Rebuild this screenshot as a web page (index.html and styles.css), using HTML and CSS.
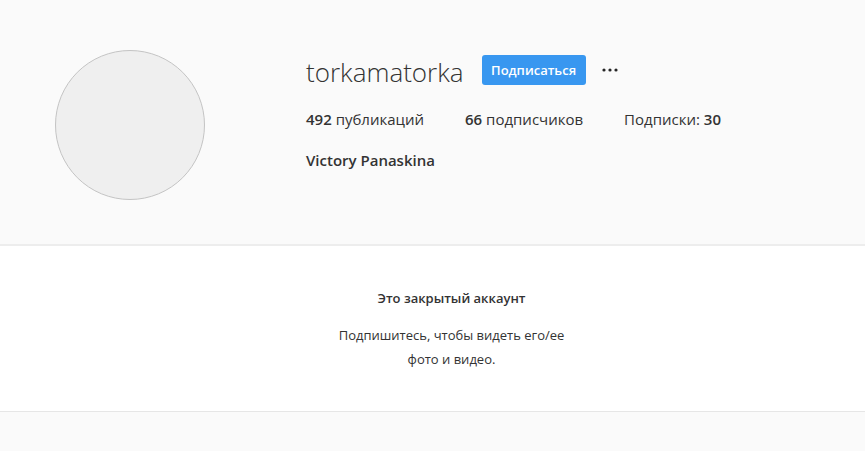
FILE: index.html
```html
<!DOCTYPE html>
<html lang="ru">
<head>
    <meta charset="UTF-8">
    <meta name="viewport" content="width=device-width, initial-scale=1.0">
    <title>torkamatorka</title>
    <link rel="stylesheet" href="styles.css">
</head>
<body>

<main>
    <!-- Profile header -->
    <header class="profile">
        <div class="avatar-column">
            <div class="avatar"></div>
        </div>
        <section class="info">
            <div class="title-row">
                <h1 class="username">torkamatorka</h1>
                <button class="follow-button" type="button">Подписаться</button>
                <button class="more-button" type="button" aria-label="Параметры">
                    <svg width="16" height="4" viewBox="0 0 16 4" fill="#262626">
                        <circle cx="2" cy="2" r="1.6"/>
                        <circle cx="8" cy="2" r="1.6"/>
                        <circle cx="14" cy="2" r="1.6"/>
                    </svg>
                </button>
            </div>
            <ul class="stats">
                <li><b>492</b> публикаций</li>
                <li><b>66</b> подписчиков</li>
                <li>Подписки: <b>30</b></li>
            </ul>
            <h2 class="full-name">Victory Panaskina</h2>
        </section>
    </header>

    <!-- Private account notice -->
    <section class="private">
        <h2 class="private-title">Это закрытый аккаунт</h2>
        <p class="private-text">Подпишитесь, чтобы видеть его/ее фото и видео.</p>
    </section>
</main>

</body>
</html>
```

FILE: styles.css
```css
body {
    margin: 0;
    background-color: #fafafa;
    color: #333;
    font-family: 'Open Sans', 'Noto Sans', sans-serif;
    font-size: 15px;
    line-height: 24px;
}

h1,
h2,
p {
    margin: 0;
}

b {
    font-weight: 600;
}

.profile {
    display: flex;
    padding: 50px 0 44px;
}

.avatar-column {
    flex: 0 0 260px;
    display: flex;
    justify-content: center;
    margin-right: 46px;
}

.avatar {
    box-sizing: border-box;
    width: 150px;
    height: 150px;
    border: 1px solid #c4c4c4;
    border-radius: 50%;
    background-color: #efefef;
}

.info {
    flex: 1;
}

.title-row {
    display: flex;
    align-items: center;
    height: 40px;
}

.username {
    padding-top: 4px;
    font-size: 26px;
    font-weight: 300;
    line-height: 40px;
}

.follow-button {
    height: 30px;
    min-width: 104px;
    margin-left: 18px;
    padding: 0 9px;
    border: 0;
    border-radius: 3px;
    background-color: #3897f0;
    color: #fff;
    font: 600 13px 'Open Sans', 'Noto Sans', sans-serif;
    cursor: pointer;
}

.more-button {
    display: flex;
    margin-left: 8px;
    padding: 8px;
    border: 0;
    background: none;
    cursor: pointer;
}

.stats {
    display: flex;
    gap: 41px;
    margin: 17px 0;
    padding: 0;
    list-style: none;
}

.full-name {
    font-size: 15px;
    font-weight: 600;
}

.private {
    padding: 40px 0 40px 38px;
    border-top: 2px solid #ededed;
    border-bottom: 1px solid #e6e6e6;
    background-color: #fff;
    text-align: center;
    font-size: 13px;
}

.private-title {
    margin-bottom: 13px;
    font-size: 13px;
    font-weight: 600;
}

.private-text {
    max-width: 240px;
    margin: 0 auto;
}
```
